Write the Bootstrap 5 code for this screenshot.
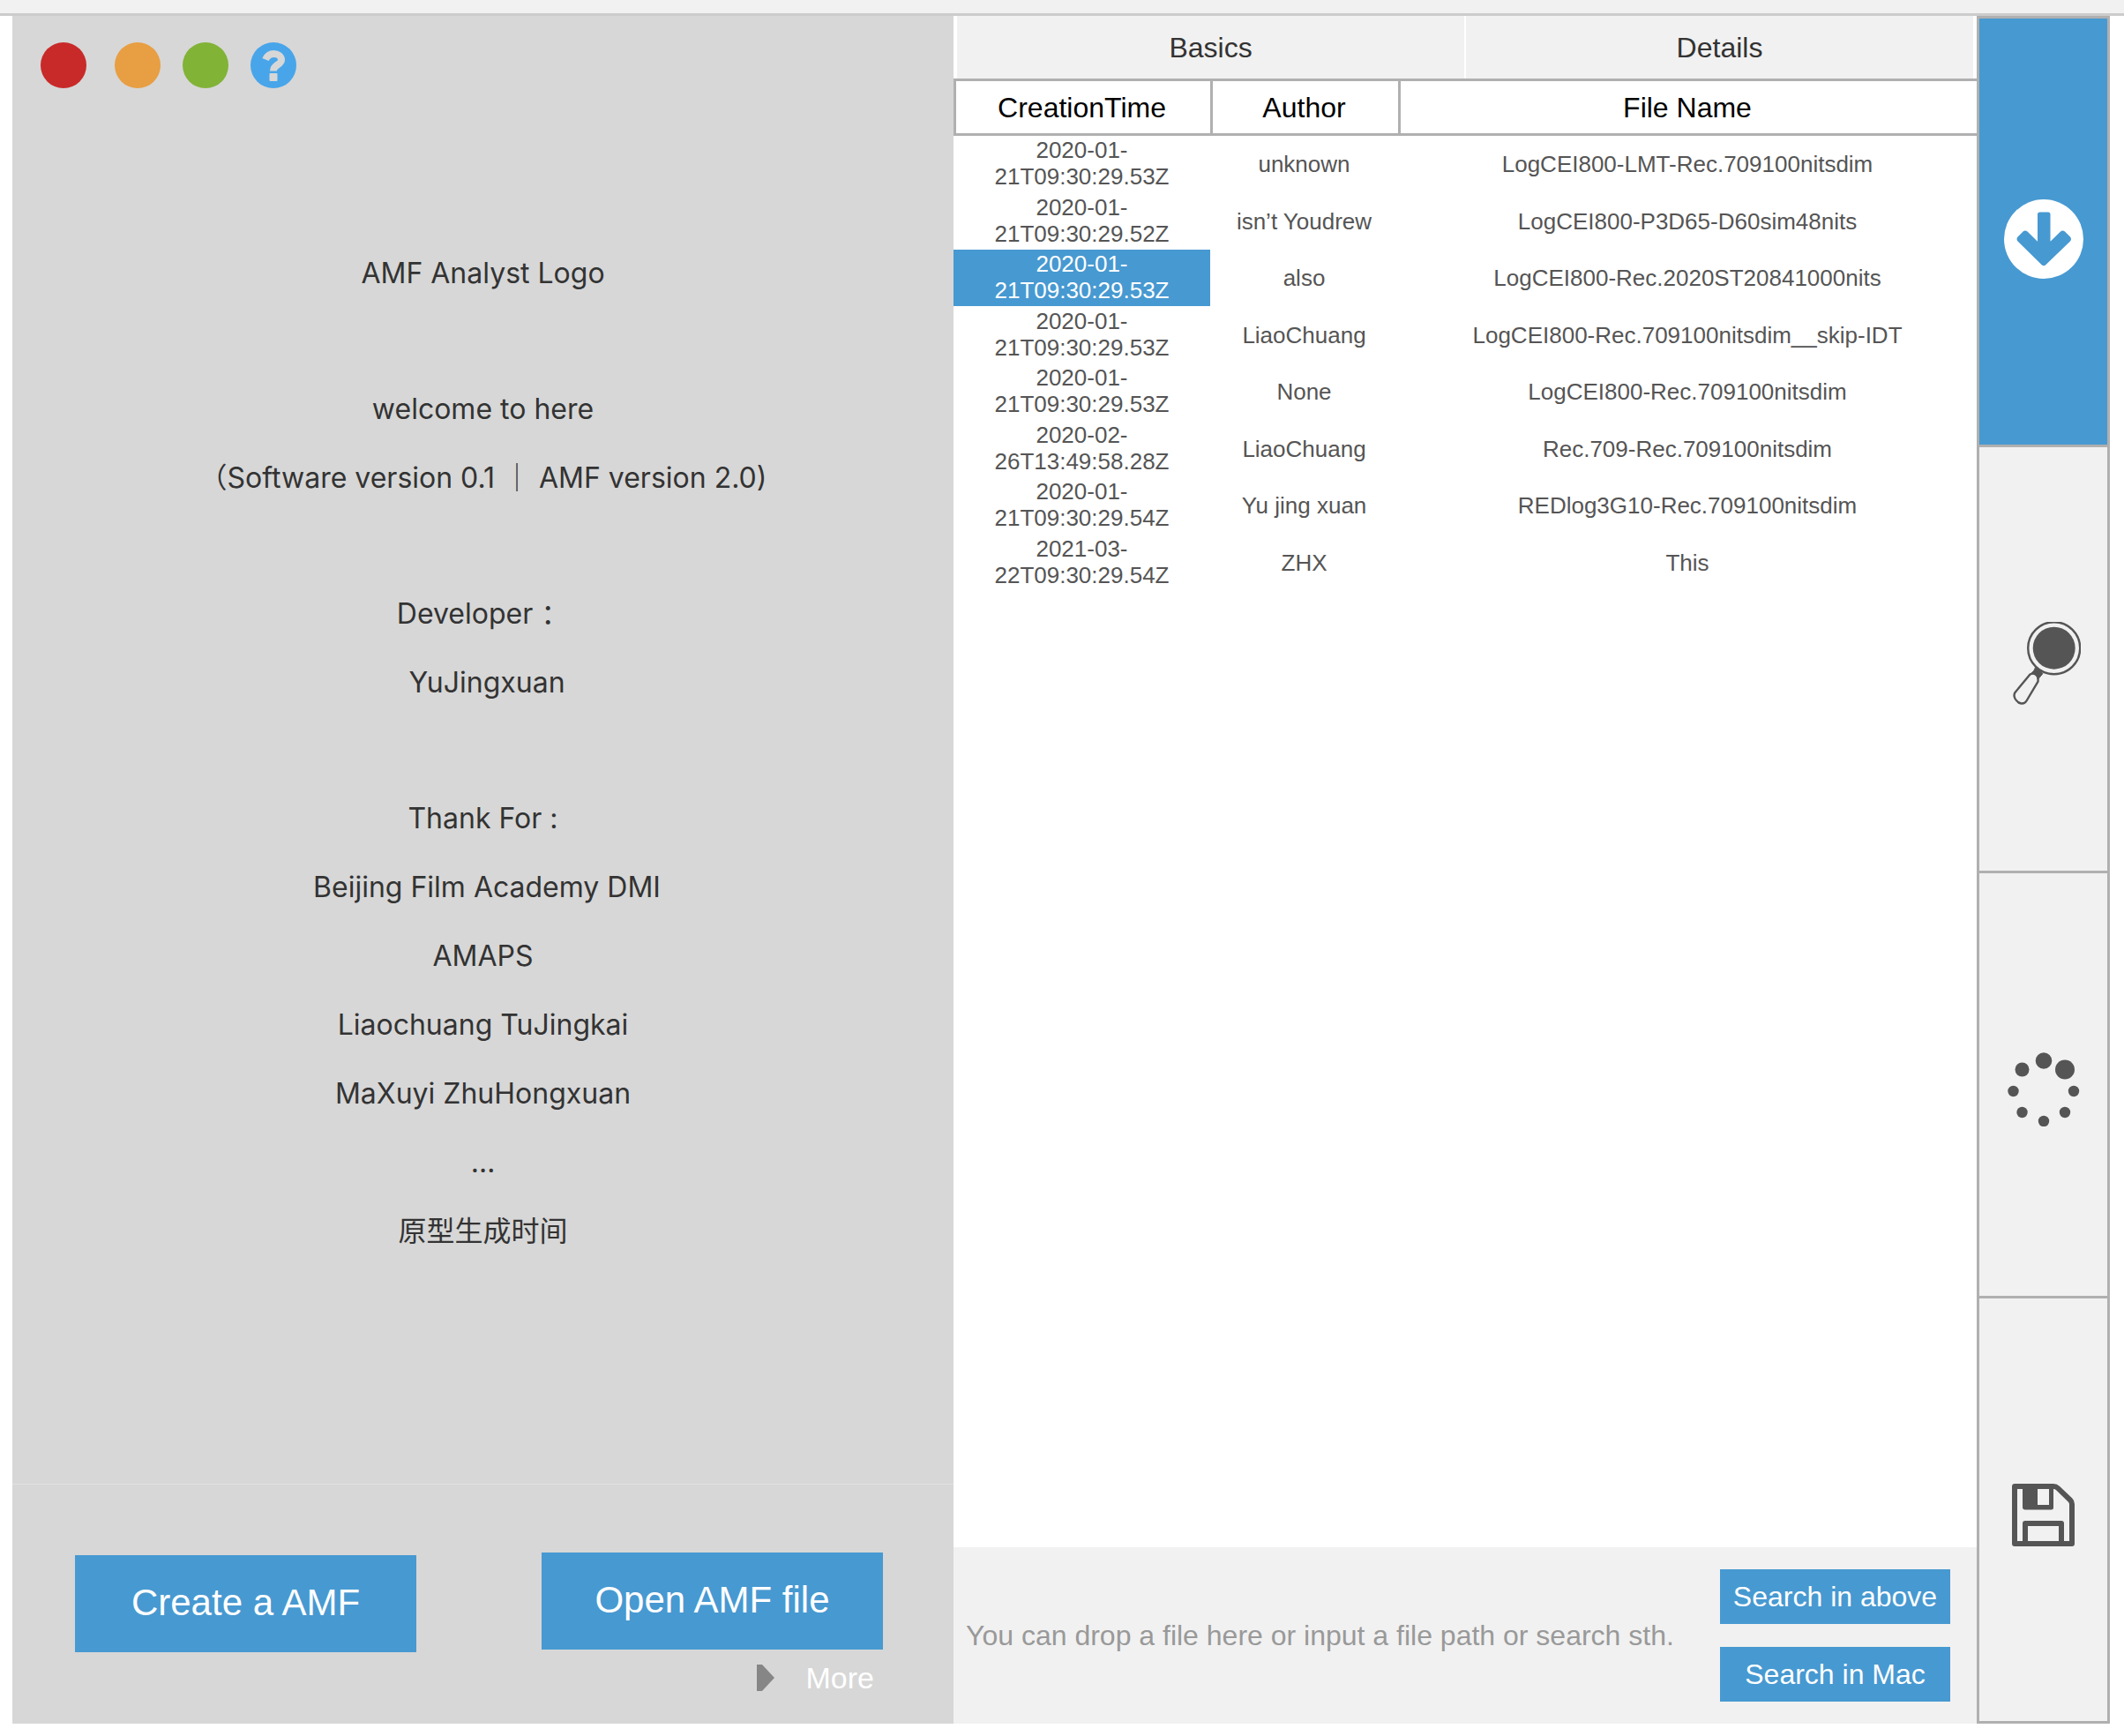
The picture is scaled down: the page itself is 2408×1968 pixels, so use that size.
<!DOCTYPE html>
<html lang="en">
<head>
<meta charset="utf-8">
<meta name="viewport" content="width=device-width, initial-scale=1">
<title>AMF Analyst</title>
<link href="https://cdn.jsdelivr.net/npm/bootstrap@5.3.0/dist/css/bootstrap.min.css" rel="stylesheet">
<style>
:root { --amf-blue: #4799d1; --amf-panel: #d7d7d7; --amf-soft: #f1f1f1; --amf-line: #b0b0b0; }
body { font-family: "Liberation Sans", Arial, sans-serif; font-size: 32px; line-height: 40px; color: #333; background: #fff; }
.top-strip { height: 18px; background: var(--amf-soft); border-bottom: 3px solid #ccc; }
.workspace { padding: 0 16px 14px 14px; }
.welcome-pane { flex: 1067 1 0; background: var(--amf-panel); }
.files-pane { flex: 1160 1 0; min-width: 0; }
.tool-rail { flex: 0 0 151px; border: 3px solid var(--amf-line); border-top: 0; }

.window-dots { padding: 30px 32px 0; gap: 25px; }
.dot-btn { width: 52px; height: 52px; border: 0; padding: 0; border-radius: 50%; }
.dot-close { background: #c82a29; margin-right: 7px; }
.dot-min { background: #e89e42; }
.dot-max { background: #81b337; }
.dot-help { background: #48a5ea; }
.dot-btn svg { display: block; }

.about { font-family: Inter, "Noto Sans CJK SC", sans-serif; padding-top: 171px; line-height: 78px; }
.about p { margin: 0; }
.about .group-start { margin-top: 76px; }

.actions { height: 272px; border-top: 1px solid #e2e2e2; padding: 77px 80px 0 71px; }
.main-btn { width: 387px; height: 110px; font-size: 42px; }
.btn-amf { --bs-btn-color: #fff; --bs-btn-bg: var(--amf-blue); --bs-btn-border-width: 0; --bs-btn-hover-color: #fff; --bs-btn-hover-bg: #3a89bf; --bs-btn-active-color: #fff; --bs-btn-active-bg: #3a89bf; --bs-btn-border-radius: 0; --bs-btn-padding-x: 0; --bs-btn-padding-y: 0; }
.btn-amf.main-btn { padding-bottom: 4px; }
.create-btn { margin-top: 3px; }
.more-link { color: #fff; font-size: 34px; gap: 36px; margin: 9px 10px 0 0; }

.tab-strip { padding: 0 4px; gap: 2px; }
.tab-btn { height: 71px; border: 0; background: var(--amf-soft); color: #333; padding: 0; }
.file-table { table-layout: fixed; width: 100%; color: #555; font-size: 26px; line-height: 30px; text-align: center; border-collapse: separate; border-spacing: 0; }
.file-table th { height: 65px; border: 3px solid var(--amf-line); border-right: 0; color: #000; font-weight: 400; font-size: 32px; padding: 0 3px 0 0; }
.file-table td { padding: 0; height: 64px; }
.file-table td:first-child { padding-bottom: 2px; }
.file-table tr:nth-child(even) td { height: 65px; }
.col-time { width: 291px; }
.col-author { width: 213px; }
.file-table td.picked { background: var(--amf-blue); color: #fff; }

.search-bar { height: 200px; background: var(--amf-soft); padding: 0 30px 0 14px; }
.path-input { border: 0; background: transparent; padding: 0; min-width: 0; height: 60px; color: #333; }
.path-input::placeholder { color: #999; opacity: 1; }
.search-actions { gap: 26px; }
.search-btn { width: 261px; height: 62px; font-size: 32px; }

.rail-btn { flex: 1 1 0; border: 0; border-top: 3px solid var(--amf-line); background: var(--amf-soft); color: #555; padding: 12px 0 0; }
.rail-btn.is-on { background: var(--amf-blue); color: #fff; padding-top: 16px; }
</style>
<script src="https://cdn.jsdelivr.net/npm/bootstrap@5.3.0/dist/js/bootstrap.bundle.min.js"></script>
</head>
<body class="d-flex flex-column min-vh-100">
<div class="top-strip"></div>
<main class="workspace d-flex flex-grow-1">

  <section class="welcome-pane d-flex flex-column">
    <div class="window-dots d-flex">
      <button type="button" class="dot-btn dot-close" aria-label="Close"></button>
      <button type="button" class="dot-btn dot-min" aria-label="Minimize"></button>
      <button type="button" class="dot-btn dot-max" aria-label="Maximize"></button>
      <button type="button" class="dot-btn dot-help" aria-label="Help">
        <svg width="52" height="52" viewBox="0 0 52 52" fill="none" aria-hidden="true">
          <path d="M17 19.500C19 15 22 13 26.500 13C31 13 35 15.500 35 20C35 25.500 26 25 26 32.500" stroke="#d7d7d7" stroke-width="8"/>
          <rect x="21.500" y="35" width="9" height="9" rx="1" fill="#d7d7d7"/>
        </svg>
      </button>
    </div>
    <div class="about text-center flex-grow-1">
      <p>AMF Analyst Logo</p>
      <p class="group-start">welcome to here</p>
      <p>（Software version 0.1 ｜ AMF version 2.0)</p>
      <p class="group-start">Developer ：</p>
      <p>&nbsp;YuJingxuan</p>
      <p class="group-start">Thank For :</p>
      <p>&nbsp;Beijing Film Academy DMI</p>
      <p>AMAPS</p>
      <p>Liaochuang TuJingkai</p>
      <p>MaXuyi ZhuHongxuan</p>
      <p>…</p>
      <p lang="zh-CN">原型生成时间</p>
    </div>
    <div class="actions">
      <div class="d-flex justify-content-between align-items-start">
        <button type="button" class="btn btn-amf main-btn create-btn">Create a AMF</button>
        <button type="button" class="btn btn-amf main-btn">Open AMF file</button>
      </div>
      <div class="d-flex justify-content-end">
        <a href="#" class="more-link d-flex align-items-center text-decoration-none">
          <svg width="20" height="30" viewBox="0 0 20 30" aria-hidden="true"><path d="M0 0H6L20 15L6 30H0Z" fill="#868686"/></svg>
          <span>More</span>
        </a>
      </div>
    </div>
  </section>

  <section class="files-pane d-flex flex-column">
    <div class="tab-strip d-flex">
      <button type="button" class="tab-btn flex-fill w-50">Basics</button>
      <button type="button" class="tab-btn flex-fill w-50">Details</button>
    </div>
    <div class="flex-grow-1">
      <table class="file-table">
        <thead>
          <tr><th class="col-time" scope="col">CreationTime</th><th class="col-author" scope="col">Author</th><th scope="col">File Name</th></tr>
        </thead>
        <tbody>
          <tr><td>2020-01-<wbr>21T09:30:29.53Z</td><td>unknown</td><td>LogCEI800-LMT-Rec.709100nitsdim</td></tr>
          <tr><td>2020-01-<wbr>21T09:30:29.52Z</td><td>isn’t Youdrew</td><td>LogCEI800-P3D65-D60sim48nits</td></tr>
          <tr><td class="picked">2020-01-<wbr>21T09:30:29.53Z</td><td>also</td><td>LogCEI800-Rec.2020ST20841000nits</td></tr>
          <tr><td>2020-01-<wbr>21T09:30:29.53Z</td><td>LiaoChuang</td><td>LogCEI800-Rec.709100nitsdim__skip-IDT</td></tr>
          <tr><td>2020-01-<wbr>21T09:30:29.53Z</td><td>None</td><td>LogCEI800-Rec.709100nitsdim</td></tr>
          <tr><td>2020-02-<wbr>26T13:49:58.28Z</td><td>LiaoChuang</td><td>Rec.709-Rec.709100nitsdim</td></tr>
          <tr><td>2020-01-<wbr>21T09:30:29.54Z</td><td>Yu jing xuan</td><td>REDlog3G10-Rec.709100nitsdim</td></tr>
          <tr><td>2021-03-<wbr>22T09:30:29.54Z</td><td>ZHX</td><td>This</td></tr>
        </tbody>
      </table>
    </div>
    <form class="search-bar d-flex align-items-center">
      <input type="text" class="path-input flex-grow-1" aria-label="File path or search text" placeholder="You can drop a file here or input a file path or search sth.">
      <div class="search-actions d-flex flex-column">
        <button type="button" class="btn btn-amf search-btn">Search in above</button>
        <button type="button" class="btn btn-amf search-btn">Search in Mac</button>
      </div>
    </form>
  </section>

  <nav class="tool-rail d-flex flex-column" aria-label="Tools">
    <button type="button" class="rail-btn is-on" aria-label="Import">
      <svg width="90" height="90" viewBox="0 0 90 90" aria-hidden="true">
        <circle cx="45" cy="45" r="45" fill="#fff"/>
        <path fill="#4799d1" d="M40.500 14.500H50Q52.500 14.500 52.500 17V47.700L64 36.500Q66.500 34.500 69 36.500L75 42.500Q77 45 75 47.500L47 74.500Q45 76 43 74.500L15.500 47.500Q13.500 45 15.500 42.500L21.500 36.500Q24 34.500 26.500 36.500L38 47.700V17Q38 14.500 40.500 14.500Z"/>
      </svg>
    </button>
    <button type="button" class="rail-btn" aria-label="Search">
      <svg width="84" height="95" viewBox="-7 1 84 95" fill="none" stroke="currentColor" aria-hidden="true">
        <circle cx="46.700" cy="30.700" r="29.500" stroke-width="2.400"/>
        <circle cx="46.700" cy="30.700" r="24" fill="currentColor" stroke="none"/>
        <path d="M26 51.500Q30 57 34 59.500L29 65.500Q27 60 20.500 59.500Q24.500 57 26 51.500Z" fill="currentColor" stroke-width="1"/>
        <path d="M19.500 60.500L2.500 81Q0.500 84 2.500 88Q5.500 93 9.500 93.500Q13.500 94 15.500 90.500L28.500 68.500Q29 63 26.500 61Q23 58.500 19.500 60.500Z" stroke-width="2.400"/>
      </svg>
    </button>
    <button type="button" class="rail-btn" aria-label="Processing">
      <svg width="82" height="84" viewBox="0 0 82 84" fill="currentColor" aria-hidden="true">
        <circle cx="41" cy="9.500" r="9.300"/><circle cx="65" cy="19.500" r="11"/><circle cx="75" cy="44" r="6.200"/><circle cx="65" cy="68" r="6.200"/>
        <circle cx="41" cy="78" r="6.200"/><circle cx="16.500" cy="68" r="6.200"/><circle cx="6.500" cy="44" r="6.200"/><circle cx="16.500" cy="19.500" r="8"/>
      </svg>
    </button>
    <button type="button" class="rail-btn" aria-label="Save">
      <svg width="71" height="71" viewBox="0 0 71 71" fill="none" stroke="currentColor" stroke-width="6" stroke-linejoin="round" aria-hidden="true">
        <path d="M3 3H47Q50 3 52 5L66 18.500Q68 20.500 68 23V68H3Z"/>
        <path d="M12 3H29V24H42V3H47V27Q47 29.500 44.500 29.500H15Q12 29.500 12 26.500Z" fill="currentColor" stroke="none"/>
        <path d="M15 68V45H56V68"/>
      </svg>
    </button>
  </nav>
</main>
</body>
</html>
